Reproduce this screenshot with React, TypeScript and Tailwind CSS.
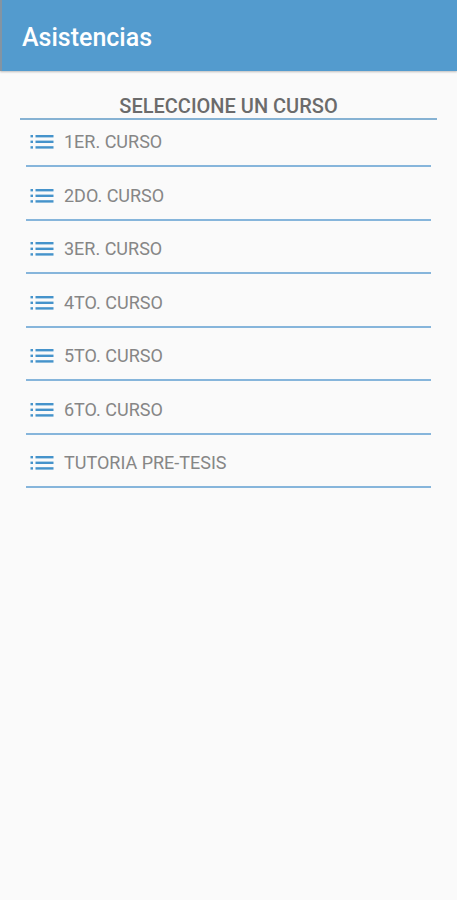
const courses = [
  "1ER. CURSO",
  "2DO. CURSO",
  "3ER. CURSO",
  "4TO. CURSO",
  "5TO. CURSO",
  "6TO. CURSO",
  "TUTORIA PRE-TESIS",
];

function ListIcon() {
  return (
    <svg width="24" height="14" viewBox="0 0 24 14" fill="#4593cb" aria-hidden="true" className="shrink-0">
      <rect x="0.5" y="0" width="2.5" height="2.4" />
      <rect x="0.5" y="5.6" width="2.5" height="2.4" />
      <rect x="0.5" y="11.2" width="2.5" height="2.4" />
      <rect x="5.5" y="0" width="18" height="2.4" />
      <rect x="5.5" y="5.6" width="18" height="2.4" />
      <rect x="5.5" y="11.2" width="18" height="2.4" />
    </svg>
  );
}

export default function App() {
  return (
    <div className="min-h-screen bg-[#fafafa] font-['Roboto',sans-serif]">
      <header className="border-l-2 border-[#8394a3] bg-[#539bce] px-5 pt-5 pb-4 shadow-[0_1px_2px_rgba(0,0,0,0.25)]">
        <h1 className="text-[25px] leading-[35px] font-medium text-white">Asistencias</h1>
      </header>

      <main className="px-5 pt-[23px]">
        <h2 className="border-b-2 border-[#86b2d3] text-center text-[20px] leading-6 font-medium text-[#6b6b6b]">
          SELECCIONE UN CURSO
        </h2>

        <ul className="mx-1.5 mt-2.5 flex min-h-[358px] flex-col justify-between">
          {courses.map((course) => (
            <li key={course} className="border-b-2 border-[#86b5db]">
              <button type="button" className="flex w-full items-center gap-2.5 pb-[11px] pl-1 text-left">
                <ListIcon />
                <span className="text-[18px] leading-6 text-[#868686]">{course}</span>
              </button>
            </li>
          ))}
        </ul>
      </main>
    </div>
  );
}
